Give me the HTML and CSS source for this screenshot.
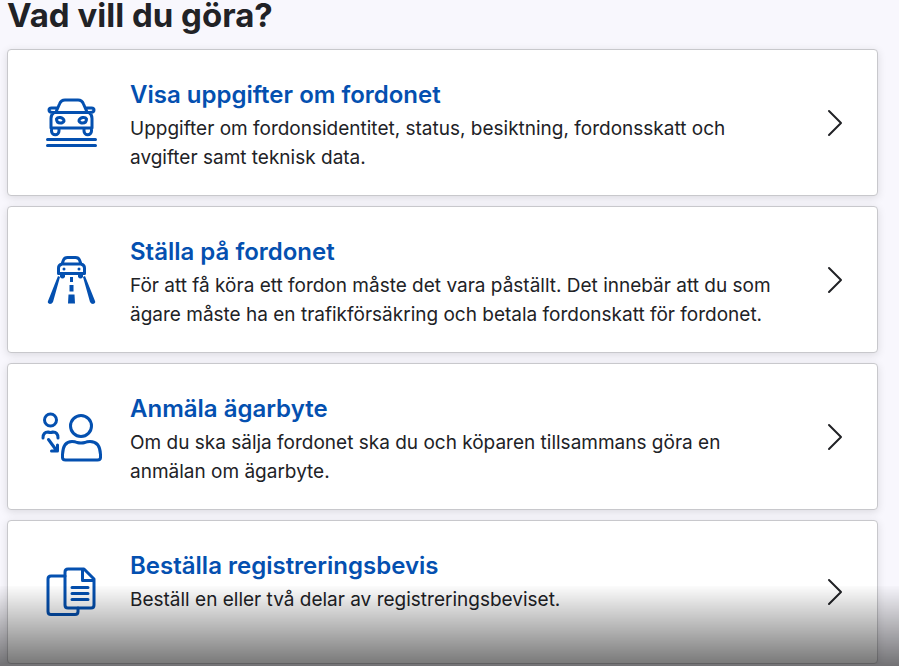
FILE: index.html
```html
<!DOCTYPE html>
<html lang="sv">

	<head>
		<meta charset="UTF-8">
		<meta name="viewport" content="width=device-width, initial-scale=1">
		<title>Vad vill du göra?</title>
		<link rel="stylesheet" href="styles.css">
	</head>

	<body>
		<main class="page">
			<h1>Vad vill du göra?</h1>
			<ul class="cards">
				<li>
					<a class="card" href="#uppgifter">
						<svg class="icon" viewBox="0 0 64 64" aria-hidden="true">
							<path d="M17 21l3.500-8q1.500-4 5.500-4h13q4 0 5.500 4l3.500 8M17.500 17h-5q-2.500 0-2.500 2 0 2.500 4 2.500h37q4 0 4-2.500 0-2-2.500-2h-5M15 21.500q-3 2-3 6v9.500h41v-9.500q0-4-3-6M12.500 37v3a3.500 3.500 0 0 0 7.500 0v-3M45 37v3a3.500 3.500 0 0 0 7.500 0v-3" />
							<path d="M17.500 28q1-2 4-1.500 3.500 1 3.500 3.500-1 2-3.500 2-4 0-4-4zM47.500 28q-1-2-4-1.500-3.500 1-3.500 3.500 1 2 3.500 2 4 0 4-4zM8.500 48.500h48M8.500 54.500h48" />
						</svg>
						<div class="text">
							<h2>Visa uppgifter om fordonet</h2>
							<p>Uppgifter om fordonsidentitet, status, besiktning, fordonsskatt och avgifter samt teknisk data.</p>
						</div>
						<svg class="chevron" viewBox="0 0 16 28" aria-hidden="true"><path d="M2 2l12 12L2 26" /></svg>
					</a>
				</li>
				<li>
					<a class="card" href="#stalla-pa">
						<svg class="icon" viewBox="0 0 64 64" aria-hidden="true">
							<path d="M23 16l1.500-4q1-2.500 4-2.500h8q3 0 4 2.500l1.500 4M23 16h19M23 16q-3.500 1-3.500 4v5.500h26V20q0-3-3.500-4" />
							<path class="fill" d="M21 26h5v3q-2.500 3-5 0zM39 26h5v3q-2.500 3-5 0zM19 28l2 1-7 25q-1 2-3 2-3-1-2-3zM46 28l-2 1 7 25q1 2 3 2 3-1 2-3zM31 29h3v5h-3zM30.500 37h4v6.500h-4zM29.500 46.500h6l.5 9h-7z" />
							<circle class="fill" cx="25" cy="21" r="1.500" />
							<circle class="fill" cx="40" cy="21" r="1.500" />
						</svg>
						<div class="text">
							<h2>Ställa på fordonet</h2>
							<p>För att få köra ett fordon måste det vara påställt. Det innebär att du som ägare måste ha en trafikförsäkring och betala fordonskatt för fordonet.</p>
						</div>
						<svg class="chevron" viewBox="0 0 16 28" aria-hidden="true"><path d="M2 2l12 12L2 26" /></svg>
					</a>
				</li>
				<li>
					<a class="card" href="#agarbyte">
						<svg class="icon" viewBox="0 0 64 64" aria-hidden="true">
							<circle cx="11.500" cy="15" r="6" />
							<circle cx="42" cy="21" r="10.500" />
							<path d="M4 33q0-6 5-6 2.500 1 5 0 5 0 5 6M9.500 34.500l8 11M18.500 40v6h-6" />
							<path d="M33 36.500q3 0 5 1 4 1 8 0 2-1 5-1 10 0 10.500 13v3q0 2.500-3 2.500h-32q-3 0-3-2.500v-3q.5-13 9.500-13z" />
						</svg>
						<div class="text">
							<h2>Anmäla ägarbyte</h2>
							<p>Om du ska sälja fordonet ska du och köparen tillsammans göra en anmälan om ägarbyte.</p>
						</div>
						<svg class="chevron" viewBox="0 0 16 28" aria-hidden="true"><path d="M2 2l12 12L2 26" /></svg>
					</a>
				</li>
				<li>
					<a class="card" href="#registreringsbevis">
						<svg class="icon" viewBox="0 0 64 64" aria-hidden="true">
							<path d="M26 16H12q-3 0-3 3v32.500q0 3 3 3h24q3 0 3-3V48" />
							<path d="M29 9h16l10 10v26q0 3-3 3H29q-3 0-3-3V12q0-3 3-3zM43.500 9v11.500H55M33 27.500h16M33 33.500h16M33 39.500h16" />
						</svg>
						<div class="text">
							<h2>Beställa registreringsbevis</h2>
							<p>Beställ en eller två delar av registreringsbeviset.</p>
						</div>
						<svg class="chevron" viewBox="0 0 16 28" aria-hidden="true"><path d="M2 2l12 12L2 26" /></svg>
					</a>
				</li>
			</ul>
		</main>
		<div class="shade"></div>
	</body>

</html>
```

FILE: styles.css
```css
* {
	box-sizing: border-box;
	margin: 0;
	padding: 0;
}

body {
	background-color: #f8f7fd;
	color: #212226;
	font-family: Inter, "Liberation Sans", sans-serif;
}

.page {
	padding: 0 21px 0 7px;
}

h1 {
	font-size: 33px;
	line-height: 30px;
	font-weight: 700;
	margin-bottom: 19px;
}

.cards {
	display: flex;
	flex-direction: column;
	gap: 10px;
	list-style: none;
}

.card {
	display: flex;
	align-items: center;
	min-height: 144px;
	padding: 29px 34px 23px 31px;
	background-color: #fff;
	border: 1px solid #c8c8cc;
	border-radius: 4px;
	box-shadow: 0 2px 8px rgba(0, 0, 0, 0.12);
	color: inherit;
	text-decoration: none;
}

.icon {
	flex: none;
	width: 64px;
	height: 64px;
	margin: -3px 27px 3px 0;
	fill: none;
	stroke: #0450b0;
	stroke-width: 3;
	stroke-linecap: round;
	stroke-linejoin: round;
}

.icon .fill {
	fill: #0450b0;
	stroke: none;
}

.text {
	flex: 1;
	align-self: flex-start;
}

.text h2 {
	color: #0450b0;
	font-size: 24px;
	line-height: 32px;
	font-weight: 600;
	margin-bottom: 3px;
}

.text p {
	max-width: 660px;
	font-size: 19px;
	line-height: 29px;
}

.chevron {
	flex: none;
	width: 16px;
	height: 28px;
	margin: -3px 0 3px 20px;
	fill: none;
	stroke: #212226;
	stroke-width: 2;
	stroke-linecap: round;
	stroke-linejoin: round;
}

/* darkened strip over the bottom of the window */
.shade {
	position: fixed;
	left: 0;
	right: 0;
	bottom: 0;
	height: 80px;
	background: linear-gradient(rgba(0, 0, 0, 0.01), rgba(0, 0, 0, 0.54));
	pointer-events: none;
}
```
